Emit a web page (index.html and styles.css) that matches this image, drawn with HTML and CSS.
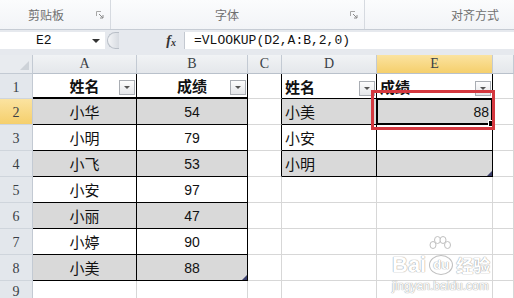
FILE: index.html
```html
<!DOCTYPE html>
<html lang="zh-CN">
<head>
    <meta charset="UTF-8">
    <title>VLOOKUP</title>
    <link rel="stylesheet" href="styles.css">
</head>
<body>
    <div class="ribbon">
        <div class="group g-clip">
            <span class="group-label">剪贴板</span>
            <svg class="launcher" width="8" height="8" viewBox="0 0 8 8"><path d="M0.5 5V0.5H5" fill="none" stroke="#a8a8a8"/><path d="M3 3L7 7M7 4V7H4" fill="none" stroke="#8a8a8a"/></svg>
        </div>
        <div class="group g-font">
            <span class="group-label">字体</span>
            <svg class="launcher" width="8" height="8" viewBox="0 0 8 8"><path d="M0.5 5V0.5H5" fill="none" stroke="#a8a8a8"/><path d="M3 3L7 7M7 4V7H4" fill="none" stroke="#8a8a8a"/></svg>
        </div>
        <div class="group g-align">
            <span class="group-label">对齐方式</span>
        </div>
    </div>

    <div class="formula-bar">
        <div class="name-box">
            <span>E2</span>
            <span class="name-arrow"></span>
        </div>
        <div class="splitter"></div>
        <div class="fx"><i>f</i><span>x</span></div>
        <div class="formula-input">=VLOOKUP(D2,A:B,2,0)</div>
    </div>

    <div class="sheet">
        <div class="corner"></div>
        <div class="ch">A</div>
        <div class="ch">B</div>
        <div class="ch">C</div>
        <div class="ch">D</div>
        <div class="ch active">E</div>
        <div class="ch"></div>

        <div class="rh">1</div>
        <div class="cell t head-row ctr bold">姓名<span class="filter"></span></div>
        <div class="cell t head-row ctr bold">成绩<span class="filter"></span></div>
        <div class="cell edge"></div>
        <div class="cell t bold">姓名<span class="filter"></span></div>
        <div class="cell t bold">成绩<span class="filter"></span></div>
        <div class="cell"></div>

        <div class="rh active">2</div>
        <div class="cell t fill ctr">小华</div>
        <div class="cell t fill ctr num">54</div>
        <div class="cell edge"></div>
        <div class="cell t fill">小美</div>
        <div class="cell t fill num right selected">88</div>
        <div class="cell"></div>

        <div class="rh">3</div>
        <div class="cell t ctr">小明</div>
        <div class="cell t ctr num">79</div>
        <div class="cell edge"></div>
        <div class="cell t">小安</div>
        <div class="cell t"></div>
        <div class="cell"></div>

        <div class="rh">4</div>
        <div class="cell t fill ctr">小飞</div>
        <div class="cell t fill ctr num">53</div>
        <div class="cell edge"></div>
        <div class="cell t fill">小明</div>
        <div class="cell t fill table-end"></div>
        <div class="cell"></div>

        <div class="rh">5</div>
        <div class="cell t ctr">小安</div>
        <div class="cell t ctr num">97</div>
        <div class="cell"></div>
        <div class="cell"></div>
        <div class="cell"></div>
        <div class="cell"></div>

        <div class="rh">6</div>
        <div class="cell t fill ctr">小丽</div>
        <div class="cell t fill ctr num">47</div>
        <div class="cell"></div>
        <div class="cell"></div>
        <div class="cell"></div>
        <div class="cell"></div>

        <div class="rh">7</div>
        <div class="cell t ctr">小婷</div>
        <div class="cell t ctr num">90</div>
        <div class="cell"></div>
        <div class="cell"></div>
        <div class="cell"></div>
        <div class="cell"></div>

        <div class="rh">8</div>
        <div class="cell t fill ctr">小美</div>
        <div class="cell t fill ctr num table-end">88</div>
        <div class="cell"></div>
        <div class="cell"></div>
        <div class="cell"></div>
        <div class="cell"></div>

        <div class="rh">9</div>
        <div class="cell"></div>
        <div class="cell"></div>
        <div class="cell"></div>
        <div class="cell"></div>
        <div class="cell"></div>
        <div class="cell"></div>
    </div>

    <div class="highlight"></div>

    <div class="watermark">
        <svg class="wm-paw" width="24" height="18" viewBox="0 0 24 18">
            <g fill="#fff" stroke="#b5b5b5" stroke-width="1">
                <ellipse cx="5" cy="9" rx="3" ry="3.5"/>
                <ellipse cx="9.5" cy="4" rx="3" ry="3.5"/>
                <ellipse cx="15" cy="4" rx="3" ry="3.5"/>
                <ellipse cx="19.5" cy="9" rx="3" ry="3.5"/>
            </g>
        </svg>
        <div class="wm-logo">Bai<span class="wm-du">du</span><span class="wm-cn">经验</span></div>
        <div class="wm-url">jingyan.baidu.com</div>
    </div>
</body>
</html>
```

FILE: styles.css
```css
* { box-sizing: border-box; }
body { margin: 0; width: 514px; height: 298px; overflow: hidden; background: #fff; font-family: "Noto Sans CJK SC", sans-serif; position: relative; }

/* ribbon group labels */
.ribbon { display: flex; height: 30px; background: linear-gradient(#fbfcfd, #f2f4f7); border-bottom: 1px solid #c6ccd4; }
.group { display: flex; align-items: center; height: 100%; border-right: 1px solid #d6dae0; }
.g-clip { width: 111px; padding-left: 28px; }
.g-font { width: 254px; padding-left: 104px; }
.g-align { flex: 1; padding-left: 86px; border-right: none; }
.group-label { font-size: 12px; color: #707070; line-height: 1; }
.launcher { margin-left: auto; margin-right: 6px; }

/* formula bar */
.formula-bar { display: flex; align-items: flex-start; height: 25px; padding-top: 2px; background: #e6e9ee; }
.name-box { width: 105px; height: 17px; background: #fff; display: flex; align-items: center; justify-content: space-between; padding: 0 5px 0 36px; font-family: "Liberation Mono", monospace; font-size: 13px; color: #111; }
.name-arrow { width: 0; height: 0; border-left: 4px solid transparent; border-right: 4px solid transparent; border-top: 4px solid #333; }
.splitter { width: 12px; height: 17px; margin-left: 2px; border: 1px solid #b9bfc7; border-right: none; border-radius: 9px 0 0 9px; background: linear-gradient(90deg, #f4f5f7, #d7dbe1); }
.fx { width: 66px; height: 17px; display: flex; align-items: center; justify-content: flex-end; padding-right: 8px; border-right: 1px solid #c3c8d0; font-family: "Liberation Serif", serif; font-weight: bold; color: #333; font-size: 14px; }
.fx span { font-size: 10px; font-style: italic; margin-top: 3px; }
.formula-input { flex: 1; height: 17px; background: #fff; padding-left: 9px; font-family: "Liberation Mono", monospace; font-size: 13px; line-height: 17px; color: #111; white-space: nowrap; }

/* sheet grid */
.sheet { display: grid; grid-template-columns: 33px 104px 111px 34px 95px 116px 21px; grid-template-rows: 19px 25px repeat(7, 26px) 19px; }
.corner { background: #e8ebef; border-right: 1px solid #c3cad3; border-bottom: 1px solid #c3cad3; position: relative; }
.corner::after { content: ""; position: absolute; right: 3px; bottom: 3px; border-left: 9px solid transparent; border-bottom: 9px solid #cdd2d8; }
.ch { background: linear-gradient(#f1f3f5, #e4e7eb); border-right: 1px solid #c3cad3; border-bottom: 1px solid #b9c1cb; display: flex; align-items: center; justify-content: center; font-family: "Liberation Serif", serif; font-size: 14px; color: #3a3f46; }
.rh { background: #e3e7ec; border-right: 1px solid #c3cad3; border-bottom: 1px solid #cfd5dc; display: flex; align-items: center; justify-content: center; padding-top: 3px; font-family: "Liberation Serif", serif; font-size: 14px; color: #3a3f46; }
.ch.active, .rh.active { background: linear-gradient(#fbe3a0, #f5cf6c); }

.cell { position: relative; display: flex; align-items: center; padding: 0 3px; border-right: 1px solid #d7d7d7; border-bottom: 1px solid #d7d7d7; font-size: 15px; color: #111; white-space: nowrap; }
.t { border-right-color: #000; border-bottom-color: #000; }
.edge { border-right-color: #000; }
.head-row { border-bottom: 2px solid #000; }
.fill { background: #d9d9d9; }
.ctr { justify-content: center; }
.right { justify-content: flex-end; }
.bold { font-weight: bold; }
.num { font-family: "Liberation Sans", sans-serif; font-size: 14px; }

.filter { position: absolute; right: 1px; bottom: 2px; width: 16px; height: 15px; border: 1px solid #a9adb3; background: linear-gradient(#fdfdfd, #e4e6e9); }
.filter::after { content: ""; position: absolute; left: 4px; top: 5px; border-left: 3px solid transparent; border-right: 3px solid transparent; border-top: 3px solid #555; }

.selected::before { content: ""; position: absolute; left: -1px; top: -1px; right: -1px; bottom: -1px; border: 2px solid #000; }
.selected::after { content: ""; position: absolute; right: -3px; bottom: -3px; width: 5px; height: 5px; background: #000; border: 1px solid #fff; }
.table-end::after { content: ""; position: absolute; right: 0; bottom: 0; border-left: 5px solid transparent; border-bottom: 5px solid #3b3f6b; }

/* red annotation box */
.highlight { position: absolute; left: 371px; top: 90px; width: 124px; height: 40px; border: 3px solid #d4383f; }

/* baidu watermark */
.watermark { position: absolute; left: 392px; top: 236px; width: 112px; color: #fff; text-shadow: 0 0 1px #8f8f8f, 0 0 1px #8f8f8f; opacity: 0.85; font-family: "Liberation Sans", sans-serif; }
.wm-paw { display: block; margin-left: 36px; }
.wm-logo { font-size: 22px; font-weight: bold; line-height: 22px; white-space: nowrap; }
.wm-du { display: inline-block; font-size: 13px; line-height: 16px; border: 1px solid #b5b5b5; border-radius: 50%; padding: 1px 3px; margin: 0 3px; vertical-align: 3px; }
.wm-cn { font-family: "Noto Sans CJK SC", sans-serif; font-size: 17px; }
.wm-url { font-size: 12px; margin-top: 3px; }
```
